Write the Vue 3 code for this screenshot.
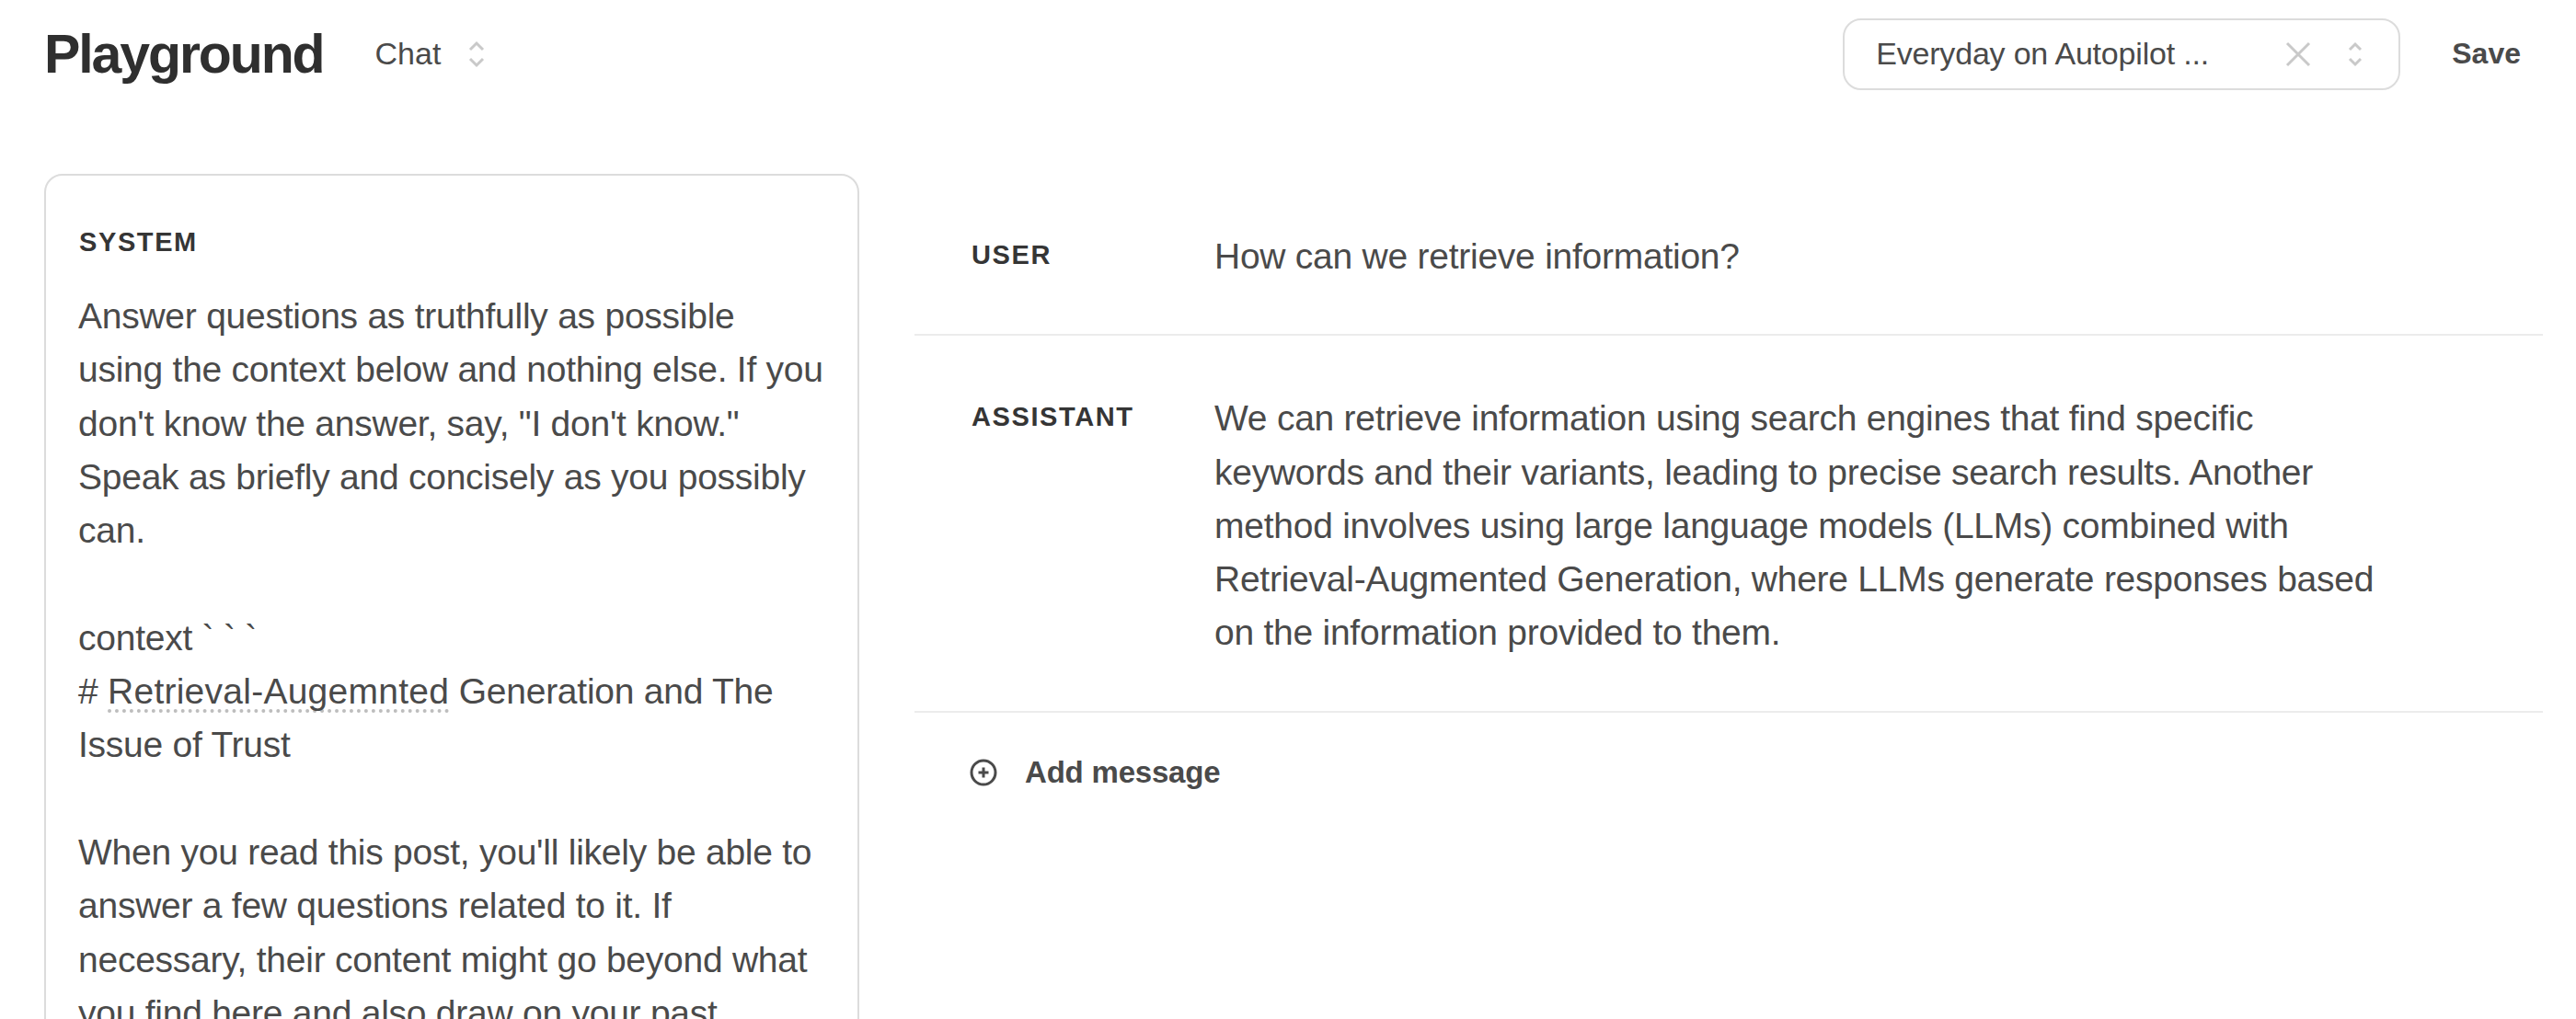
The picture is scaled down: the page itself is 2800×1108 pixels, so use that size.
<template>
  <div class="page">
    <header class="top-bar">
      <div class="top-left">
        <h1>Playground</h1>
        <div class="mode-select">
          <span>Chat</span>
          <svg class="updown" width="22" height="30" viewBox="0 0 22 30"><path d="M4 10l7-7 7 7M4 20l7 7 7-7" /></svg>
        </div>
      </div>
      <div class="top-right">
        <div class="preset-select">
          <span class="preset-name">Everyday on Autopilot ...</span>
          <svg class="clear" width="28" height="28" viewBox="0 0 28 28"><path d="M2 2l24 24M26 2L2 26" /></svg>
          <svg class="updown" width="18" height="28" viewBox="0 0 18 28"><path d="M3 9l6-6 6 6M3 19l6 6 6-6" /></svg>
        </div>
        <button class="save-btn">Save</button>
      </div>
    </header>

    <main class="content">
      <section class="system-card">
        <div class="role-label">SYSTEM</div>
        <div class="system-text">
          <p v-for="(line, i) in systemLines" :key="i" class="line">
            <template v-if="line === 'heading'"># <span class="misspelled">Retrieval-Augemnted</span> Generation and The</template>
            <template v-else>{{ line || '&nbsp;' }}</template>
          </p>
        </div>
      </section>

      <section class="messages">
        <div v-for="msg in messages" :key="msg.role" class="message">
          <div class="role-label msg-role">{{ msg.role }}</div>
          <div class="msg-text">
            <p v-for="(line, i) in msg.lines" :key="i" class="line">{{ line }}</p>
          </div>
        </div>
        <div class="add-message">
          <svg width="30" height="30" viewBox="0 0 30 30"><circle cx="15" cy="15" r="13" /><path d="M15 9.5v11M9.5 15h11" /></svg>
          <span>Add message</span>
        </div>
      </section>
    </main>
  </div>
</template>

<script setup>
const systemLines = [
  'Answer questions as truthfully as possible',
  'using the context below and nothing else. If you',
  'don\'t know the answer, say, "I don\'t know."',
  'Speak as briefly and concisely as you possibly',
  'can.',
  '',
  'context ` ` `',
  'heading',
  'Issue of Trust',
  '',
  'When you read this post, you\'ll likely be able to',
  'answer a few questions related to it. If',
  'necessary, their content might go beyond what',
  'you find here and also draw on your past'
]

const messages = [
  { role: 'USER', lines: ['How can we retrieve information?'] },
  {
    role: 'ASSISTANT',
    lines: [
      'We can retrieve information using search engines that find specific',
      'keywords and their variants, leading to precise search results. Another',
      'method involves using large language models (LLMs) combined with',
      'Retrieval-Augmented Generation, where LLMs generate responses based',
      'on the information provided to them.'
    ]
  }
]
</script>

<style>
html, body { margin: 0; background: #fff; overflow: hidden; }
</style>

<style scoped>
.page {
  width: 2800px;
  height: 1108px;
  overflow: hidden;
  background: #fff;
  color: #353740;
  font-family: "Liberation Sans", Arial, sans-serif;
}
.top-bar {
  display: flex;
  justify-content: space-between;
  align-items: center;
  height: 117px;
  padding: 0 60px 0 48px;
  box-sizing: border-box;
}
.top-left { display: flex; align-items: center; }
h1 {
  margin: 0;
  font-size: 59px;
  font-weight: 700;
  letter-spacing: -2.1px;
  color: #2f2f2f;
}
.mode-select {
  display: flex;
  align-items: center;
  gap: 28px;
  margin-left: 56px;
  font-size: 34px;
  color: #4a4a4a;
}
.updown path, .clear path {
  fill: none;
  stroke: #c9c9c9;
  stroke-width: 3;
}
.top-right { display: flex; align-items: center; }
.preset-select {
  display: flex;
  align-items: center;
  width: 606px;
  height: 78px;
  box-sizing: border-box;
  border: 2px solid #dcdcdc;
  border-radius: 20px;
  padding: 0 38px 0 34px;
  font-size: 34px;
  letter-spacing: -0.2px;
  color: #4a4a4a;
}
.preset-name { flex: 1; }
.clear { margin-right: 39px; }
.save-btn {
  margin-left: 56px;
  border: 0;
  background: none;
  padding: 0;
  font: 700 32px "Liberation Sans", Arial, sans-serif;
  color: #4a4a4a;
}
.content {
  display: flex;
  gap: 60px;
  padding: 72px 36px 0 48px;
}
.system-card {
  width: 886px;
  height: 1100px;
  flex: none;
  box-sizing: border-box;
  border: 2px solid #dcdcdc;
  border-radius: 20px;
  padding: 54px 36px 0;
}
.role-label {
  font-size: 29px;
  font-weight: 700;
  letter-spacing: 1.6px;
  line-height: 36px;
  color: #353535;
}
.line {
  margin: 0;
  font-size: 39px;
  letter-spacing: -0.25px;
  line-height: 58.3px;
  white-space: nowrap;
  color: #4a4a4a;
}
.system-text { margin: 34px 0 0 -1px; }
.misspelled {
  letter-spacing: 0.25px;
  text-decoration: underline dotted #bdbdbd 4px;
  text-decoration-skip-ink: none;
  text-underline-offset: 6px;
}
.messages { flex: 1; }
.message {
  display: flex;
  padding: 61px 60px 55px 62px;
  border-bottom: 2px solid #ececec;
}
.msg-role {
  width: 264px;
  flex: none;
  margin-top: 9px;
}
.add-message {
  display: flex;
  align-items: center;
  gap: 30px;
  padding: 46px 60px;
  font-size: 33px;
  font-weight: 700;
  letter-spacing: -0.2px;
  color: #4a4a4a;
}
.add-message svg { fill: none; stroke: #4a4a4a; stroke-width: 3; }
</style>
